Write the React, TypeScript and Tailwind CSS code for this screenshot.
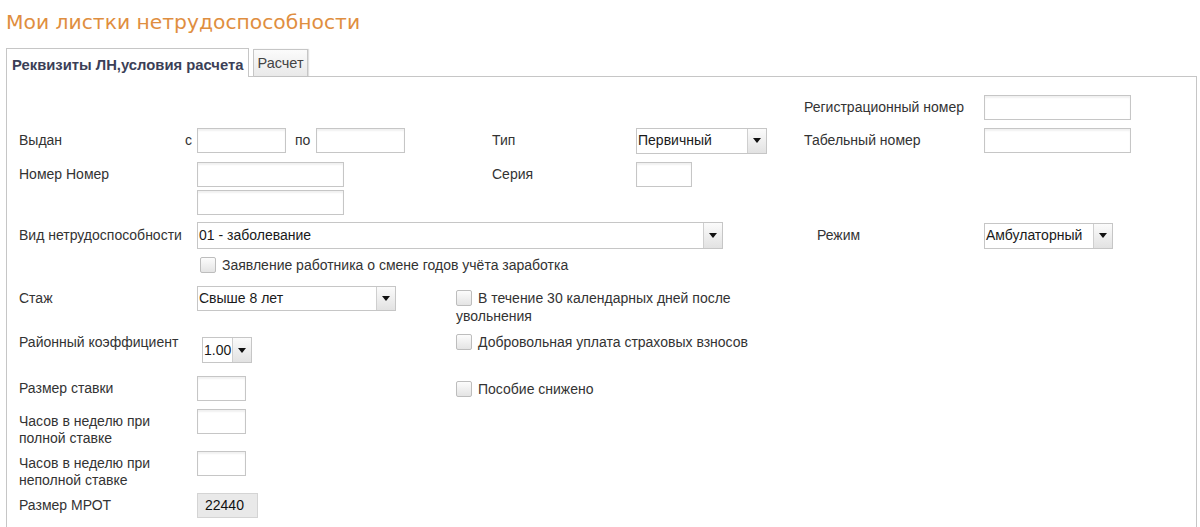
import React from 'react';

const font = "font-['Liberation_Sans',Arial,sans-serif]";

function Field({ w, value, gray }: { w: string; value?: string; gray?: boolean }) {
  return (
    <div
      className={`${w} h-[25px] shrink-0 border ${
        gray
          ? 'border-[#d4d4d4] bg-[#e9e9e9] pl-[7px] text-[#111]'
          : 'border-[#c6c6c6] bg-white shadow-[inset_0_2px_2px_rgba(0,0,0,0.06)]'
      } flex items-center text-[14px]`}
    >
      {value}
    </div>
  );
}

function Select({ w, value, h = 'h-[26px]' }: { w: string; value: string; h?: string }) {
  return (
    <div className={`${w} ${h} shrink-0 flex border border-[#c6c6c6] bg-white text-[14px] text-[#1a1a1a]`}>
      <div className="flex-1 flex items-center pl-px overflow-hidden whitespace-nowrap">{value}</div>
      <div className="w-[19px] flex items-center justify-center border-l border-[#cfcfcf] bg-linear-to-b from-[#fbfbfb] to-[#e2e2e2]">
        <svg width="8" height="5" viewBox="0 0 8 5">
          <path d="M0 0H8L4 5Z" fill="#111" />
        </svg>
      </div>
    </div>
  );
}

function Box() {
  return (
    <span className="inline-block align-[-3px] w-[16px] h-[16px] mr-[6px] rounded-[2px] border border-[#bdbdbd] bg-linear-to-b from-[#fcfcfc] to-[#e4e4e4]" />
  );
}

export default function App() {
  return (
    <div className={`${font} bg-white w-[1200px] h-[527px] overflow-hidden text-[#333] text-[14px]`}>
      <h1 className="font-['DejaVu_Sans',Verdana,sans-serif] text-[20.3px] leading-[24px] text-[#df8e40] pl-[6px] pt-[10px]">
        Мои листки нетрудоспособности
      </h1>

      <div className="ml-[6px] w-[1191px] mt-[13px]">
        <div className="flex items-end h-[29px]">
          <div className="h-[29px] w-[243px] border border-b-0 border-[#c6c6c6] bg-white relative z-10 -mb-px pl-[5px] pt-[5px] font-bold text-[14.8px] text-[#3b3f57] whitespace-nowrap">
            Реквизиты ЛН,условия расчета
          </div>
          <div className="ml-[4px] h-[27px] w-[55px] border border-b-0 border-[#c6c6c6] bg-linear-to-b from-[#fbfbfb] to-[#e9e9e9] shadow-[1px_0_1px_rgba(0,0,0,0.12)] text-center pt-[3px] text-[14.5px] text-[#444] whitespace-nowrap">
            Расчет
          </div>
        </div>

        <div className="border border-[#c6c6c6] h-[460px] pl-[12px] pt-[18px]">
          {/* Регистрационный номер */}
          <div className="flex items-center h-[25px]">
            <div className="w-[785px] shrink-0" />
            <div className="w-[180px] shrink-0">Регистрационный номер</div>
            <Field w="w-[147px]" />
          </div>

          {/* Выдан */}
          <div className="flex items-center h-[27px] mt-[7px]">
            <div className="w-[178px] shrink-0 flex justify-between pr-[5px]">
              <span>Выдан</span>
              <span>с</span>
            </div>
            <Field w="w-[89px]" />
            <span className="w-[30px] pl-[9px] shrink-0">по</span>
            <Field w="w-[89px]" />
            <div className="w-[87px] shrink-0" />
            <div className="w-[144px] shrink-0">Тип</div>
            <Select w="w-[131px]" value="Первичный" />
            <div className="w-[37px] shrink-0" />
            <div className="w-[180px] shrink-0">Табельный номер</div>
            <Field w="w-[147px]" />
          </div>

          {/* Номер */}
          <div className="flex items-start mt-[8px]">
            <div className="w-[178px] shrink-0 leading-[25px]">Номер Номер</div>
            <div className="flex flex-col gap-[3px]">
              <Field w="w-[147px]" />
              <Field w="w-[147px]" />
            </div>
            <div className="w-[148px] shrink-0" />
            <div className="w-[144px] shrink-0 leading-[25px]">Серия</div>
            <Field w="w-[56px]" />
          </div>

          {/* Вид нетрудоспособности */}
          <div className="flex items-center h-[27px] mt-[7px]">
            <div className="w-[178px] shrink-0">Вид нетрудоспособности</div>
            <Select w="w-[526px]" h="h-[27px]" value="01 - заболевание" />
            <div className="w-[94px] shrink-0" />
            <div className="w-[167px] shrink-0">Режим</div>
            <Select w="w-[129px]" value="Амбулаторный" />
          </div>

          <div className="mt-[7px] pl-[181px] leading-[18px]">
            <Box />
            Заявление работника о смене годов учёта заработка
          </div>

          {/* Стаж */}
          <div className="flex items-start mt-[12px]">
            <div className="w-[178px] shrink-0 leading-[25px]">Стаж</div>
            <Select w="w-[199px]" h="h-[25px]" value="Свыше 8 лет" />
            <div className="w-[60px] shrink-0" />
            <p className="w-[292px] mt-[3px] leading-[18px]">
              <Box />В течение 30 календарных дней после увольнения
            </p>
          </div>

          {/* Районный коэффициент */}
          <div className="flex items-start mt-[8px]">
            <div className="w-[178px] shrink-0 leading-[17px] pt-px">Районный коэффициент</div>
            <div className="ml-[5px] mt-[4px]">
              <Select w="w-[50px]" value="1.00" />
            </div>
            <div className="w-[204px] shrink-0" />
            <p className="leading-[18px]">
              <Box />Добровольная уплата страховых взносов
            </p>
          </div>

          {/* Размер ставки */}
          <div className="flex items-center h-[25px] mt-[13px]">
            <div className="w-[178px] shrink-0">Размер ставки</div>
            <Field w="w-[49px]" />
            <div className="w-[210px] shrink-0" />
            <p className="leading-[18px]">
              <Box />Пособие снижено
            </p>
          </div>

          <div className="flex items-start mt-[8px]">
            <div className="w-[178px] shrink-0 leading-[17px] pt-[4px]">
              Часов в неделю при
              <br />
              полной ставке
            </div>
            <Field w="w-[49px]" />
          </div>

          <div className="flex items-start mt-[4px]">
            <div className="w-[178px] shrink-0 leading-[17px] pt-[4px]">
              Часов в неделю при
              <br />
              неполной ставке
            </div>
            <Field w="w-[49px]" />
          </div>

          <div className="flex items-center h-[26px] mt-[3px]">
            <div className="w-[178px] shrink-0">Размер МРОТ</div>
            <Field w="w-[61px]" gray value="22440" />
          </div>
        </div>
      </div>
    </div>
  );
}
